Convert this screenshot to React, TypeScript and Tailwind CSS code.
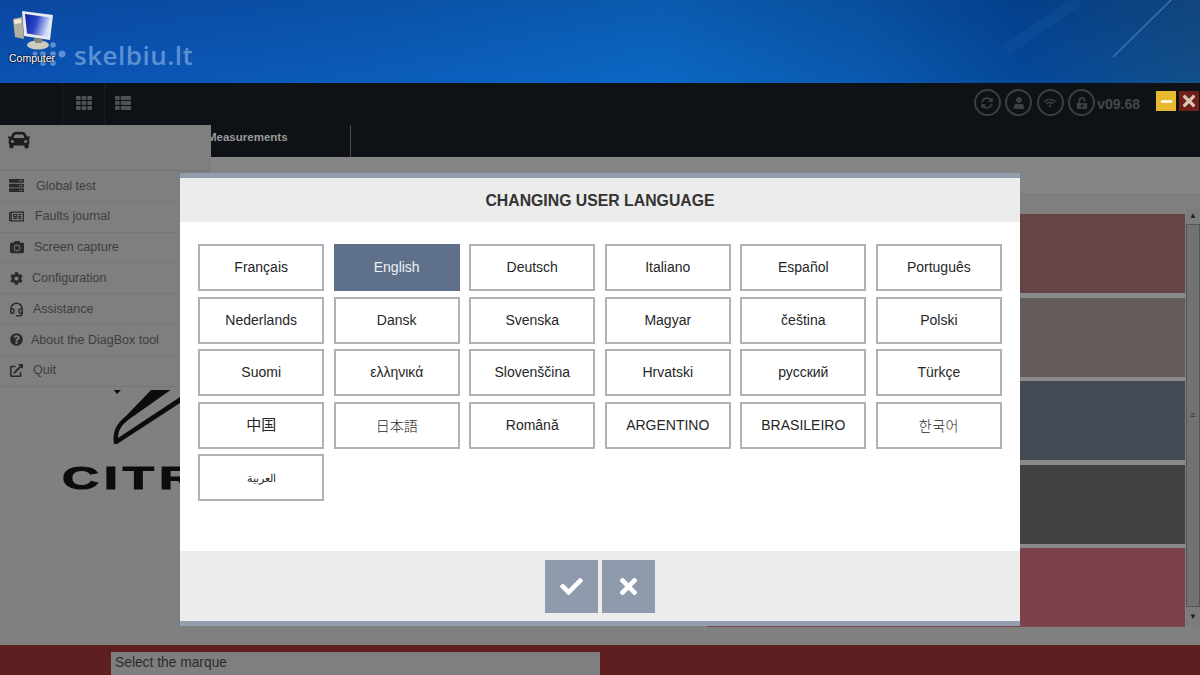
import { FaCamera, FaCar, FaCheck, FaCog, FaExternalLinkAlt, FaMinus, FaQuestionCircle, FaRegNewspaper, FaServer, FaSyncAlt, FaTh, FaThList, FaTimes, FaUnlockAlt, FaUser, FaWifi } from "react-icons/fa";
import { Headset } from "lucide-react";

const LANGUAGES = [
  "Français", "English", "Deutsch", "Italiano", "Español", "Português",
  "Nederlands", "Dansk", "Svenska", "Magyar", "čeština", "Polski",
  "Suomi", "ελληνικά", "Slovenščina", "Hrvatski", "русский", "Türkçe",
];

const MENU = [
  { label: "Global test", icon: <FaServer className="text-[15px]" />, gap: "ml-[12px]" },
  { label: "Faults journal", icon: <FaRegNewspaper className="text-[15px]" />, gap: "ml-[11px]" },
  { label: "Screen capture", icon: <FaCamera className="text-[14px]" />, gap: "ml-[10px]" },
  { label: "Configuration", icon: <FaCog className="text-[13px]" />, gap: "ml-[8px]" },
  { label: "Assistance", icon: <Headset size={15} strokeWidth={2.4} />, gap: "ml-[9px]" },
  { label: "About the DiagBox tool", icon: <FaQuestionCircle className="text-[13px]" />, gap: "ml-[7px]" },
  { label: "Quit", icon: <FaExternalLinkAlt className="text-[13px]" />, gap: "ml-[9px]" },
];

const TILES = ["bg-[#664445]", "bg-[#635c58]", "bg-[#454a57]", "bg-[#424242]", "bg-[#7b424b]"];

function LangButton({ label, active, className }: { label: string; active?: boolean; className?: string }) {
  return (
    <button
      className={`flex items-center justify-center border-2 ${
        active ? "bg-[#5e708a] border-[#5e708a] text-[#eef1f5]" : "bg-white border-[#aeb2b6] text-[#262626]"
      } ${className ?? "text-[14px]"}`}
    >
      {label}
    </button>
  );
}

function StatusIcon({ children }: { children: React.ReactNode }) {
  return (
    <div className="w-[27px] h-[27px] rounded-full border-2 border-[#3a3f44] flex items-center justify-center text-[#3a3f44] text-[12px]">
      {children}
    </div>
  );
}

function ComputerIcon() {
  return (
    <svg width="42" height="40" viewBox="0 0 42 40">
      <defs>
        <linearGradient id="screen" x1="0" y1="0" x2="1" y2="0.3">
          <stop offset="0" stopColor="#10209e" />
          <stop offset="0.5" stopColor="#2a47c8" />
          <stop offset="1" stopColor="#d6dcf6" />
        </linearGradient>
      </defs>
      <path d="M1 9 L10 7 L12 29 L3 27 Z" fill="#b4ae9e" />
      <path d="M2 10 L9 9 L9.5 13 L2.5 14 Z" fill="#efe9d6" />
      <ellipse cx="26" cy="35" rx="11" ry="4.5" fill="#cfccbe" />
      <path d="M22 28 L30 29 L30 33 L23 33 Z" fill="#8b8778" />
      <path d="M10 1 L41 5 L38 30 L12 26 Z" fill="#e8eaef" />
      <path d="M13 4 L38 7.5 L36 27 L15 23.5 Z" fill="url(#screen)" />
    </svg>
  );
}

function WatermarkDots() {
  return (
    <svg width="34" height="26" viewBox="0 0 34 26" fill="#5c90d2">
      <circle cx="11" cy="3" r="2.8" />
      <circle cx="21" cy="3" r="2.8" />
      <circle cx="3" cy="12" r="2.4" />
      <circle cx="11" cy="12" r="2.8" />
      <circle cx="21" cy="12" r="2.8" />
      <circle cx="30" cy="12" r="3.4" />
      <circle cx="11" cy="21" r="2.8" />
      <circle cx="21" cy="21" r="2.8" />
    </svg>
  );
}

export default function App() {
  return (
    <div className="relative h-[675px] w-[1200px] overflow-hidden flex flex-col bg-[#808080] font-['Liberation_Sans','Noto_Sans_CJK_SC',sans-serif]">
      {/* desktop strip */}
      <div className="relative h-[83px] shrink-0 bg-[linear-gradient(180deg,rgba(0,0,30,0.13),rgba(0,0,0,0)),linear-gradient(90deg,#0b52b4_0%,#0b5cba_30%,#0b68c4_55%,#0a5ab0_72%,#04489a_85%,#134f8a_100%)] overflow-hidden">
        <svg className="absolute right-0 top-0 blur-[0.5px]" width="200" height="83" viewBox="0 0 200 83" fill="none">
          <path d="M6 50 L79 0" stroke="#1a5fa8" strokeWidth="12" opacity="0.22" />
          <path d="M113 57 L171 0" stroke="#4a88c8" strokeWidth="1.2" opacity="0.8" />
        </svg>
        <div className="absolute left-[32px] top-[42px]">
          <WatermarkDots />
        </div>
        <div className="absolute left-[12px] top-[10px]">
          <ComputerIcon />
        </div>
        <div className="absolute left-[9px] top-[52px] text-[10.5px] leading-[12px] text-white [text-shadow:0_0_2px_#000,0_0_2px_#000]">
          Computer
        </div>
        <div className="absolute left-[74px] top-[40px] text-[26px] leading-[30px] font-semibold tracking-[0.5px] text-[#5c90d2] font-['Open_Sans',sans-serif]">
          skelbiu.lt
        </div>
      </div>

      {/* app nav */}
      <div className="h-[74px] shrink-0 bg-[#0e1216] flex flex-col">
        <div className="h-[42px] flex items-start">
          <div className="ml-[62px] w-[42px] h-full pb-[2px] border-l border-[#1a1e22] flex items-center justify-center text-[#4e5054] text-[16px]">
            <FaTh />
          </div>
          <div className="w-[36px] h-full pb-[2px] border-l border-[#1a1e22] flex items-center justify-center text-[#4e5054] text-[16px]">
            <FaThList />
          </div>
          <div className="ml-auto mt-[6px] flex items-center gap-[4.5px]">
            <StatusIcon><FaSyncAlt /></StatusIcon>
            <StatusIcon><FaUser /></StatusIcon>
            <StatusIcon><FaWifi /></StatusIcon>
            <StatusIcon><FaUnlockAlt /></StatusIcon>
          </div>
          <div className="ml-[2px] mt-[13px] text-[14px] leading-[16px] font-bold text-[#43484e]">v09.68</div>
          <button className="ml-[16px] mt-[8px] w-[20px] h-[20px] bg-[#e8b92f] flex items-center justify-center text-white text-[13px]">
            <FaMinus />
          </button>
          <button className="ml-[3px] mr-[1px] mt-[8px] w-[20px] h-[20px] bg-[#6e201b] flex items-center justify-center text-[#d8c9b4] text-[18px]">
            <FaTimes />
          </button>
        </div>
        <div className="h-[32px] flex">
          <div className="ml-[207px] w-[144px] h-full pb-[6px] border-r border-[#4a4a4a] flex items-center text-[11.5px] font-bold text-[#9b9b9b]">
            Measurements
          </div>
        </div>
      </div>

      {/* content */}
      <div className="flex-1 flex flex-col min-h-0">
        <div className="h-[38px] shrink-0 bg-[#858585] border-b border-[#787878]" />
        <div className="flex-1 flex min-h-0 pt-[19px] pb-[18px]">
          <div className="flex-1 pl-[62px] pt-[171px] overflow-hidden">
            <svg width="140" height="60" viewBox="62 385 140 60">
              <path d="M113 389 L122 389 L117 394 Z" fill="#0c0c0c" />
              <path d="M114 444 C112 432 116 424 126 416 L152 389 L172 389 L128 420 C122 425 118 430 118 438 L180 397 L180 403 L117 444 Z" fill="#0c0c0c" />
            </svg>
            <div className="mt-[16px] origin-left scale-x-[1.6] text-[32px] leading-[35px] tracking-[3px] font-bold text-[#0c0c0c] [-webkit-text-stroke:1px_#0c0c0c]">
              CITR
            </div>
          </div>
          <div className="w-[478px] shrink-0 grid grid-rows-5 gap-y-[4.5px] bg-[#8a8a8a]">
            {TILES.map((tile) => (
              <div key={tile} className={tile} />
            ))}
          </div>
          <div className="w-[14px] ml-px shrink-0 -mt-[6px] flex flex-col items-center bg-[#7c7c7c]">
            <div className="h-[16px] text-[8px] leading-[16px] text-[#222]">▲</div>
            <div className="flex-1 w-full border border-[#555] bg-[#727272] flex items-center justify-center text-[#333] text-[9px]">
              ≡
            </div>
            <div className="h-[20px] text-[8px] leading-[20px] text-[#222]">▼</div>
          </div>
        </div>
      </div>

      {/* status bar */}
      <div className="h-[30px] shrink-0 bg-[#5e1f20] pt-[7px] pl-[111px]">
        <div className="w-[489px] h-[23px] bg-[#7f7f7f] pl-[4px] text-[13.8px] leading-[21px] text-[#2b2b2b]">
          Select the marque
        </div>
      </div>

      {/* side menu, lying over the nav */}
      <div className="absolute left-0 top-[125px] w-[211px] h-[265px] bg-[#7f7f7f] flex flex-col text-[#3e3e3e] text-[12.5px]">
        <div className="h-[46px] shrink-0 border-b border-[#747474] pl-[8px] pt-[4px] text-[#1e1e1e] text-[22px]">
          <FaCar />
        </div>
        {MENU.map((item) => (
          <div key={item.label} className="h-[30.8px] shrink-0 border-b border-[#767676] flex items-center pl-[9px]">
            <span className="w-[15px] flex justify-center text-[#2a2a2a]">{item.icon}</span>
            <span className={item.gap}>{item.label}</span>
          </div>
        ))}
      </div>

      {/* language dialog */}
      <div className="absolute left-[180px] top-[173px] w-[840px] h-[453px] flex flex-col border-y-[5px] border-[#929dad] bg-white">
        <div className="h-[44px] shrink-0 bg-[#ececec] pt-[2px] flex items-center justify-center text-[15.8px] font-bold text-[#333]">
          CHANGING USER LANGUAGE
        </div>
        <div className="flex-1 px-[18px] pt-[22px]">
          <div className="grid grid-cols-6 auto-rows-[47px] gap-x-[9.2px] gap-y-[5.6px]">
            {LANGUAGES.map((lang) => (
              <LangButton key={lang} label={lang} active={lang === "English"} />
            ))}
            <LangButton label="中国" className="text-[15px]" />
            <LangButton label="日本語" className="text-[14px] font-light font-['Noto_Sans_CJK_JP',sans-serif]" />
            <LangButton label="Română" />
            <LangButton label="ARGENTINO" />
            <LangButton label="BRASILEIRO" />
            <LangButton label="한국어" className="text-[14px] font-light tracking-[0.5px] font-['Noto_Sans_CJK_KR',sans-serif]" />
            <LangButton label="العربية" className="text-[11px]" />
          </div>
        </div>
        <div className="h-[70px] shrink-0 bg-[#ececec] flex justify-center gap-[4px] pt-[9px]">
          <button className="w-[53px] h-[53px] bg-[#8f9bad] flex items-center justify-center text-white text-[23px]">
            <FaCheck />
          </button>
          <button className="w-[53px] h-[53px] bg-[#8f9bad] flex items-center justify-center text-white text-[25px]">
            <FaTimes />
          </button>
        </div>
      </div>
    </div>
  );
}
